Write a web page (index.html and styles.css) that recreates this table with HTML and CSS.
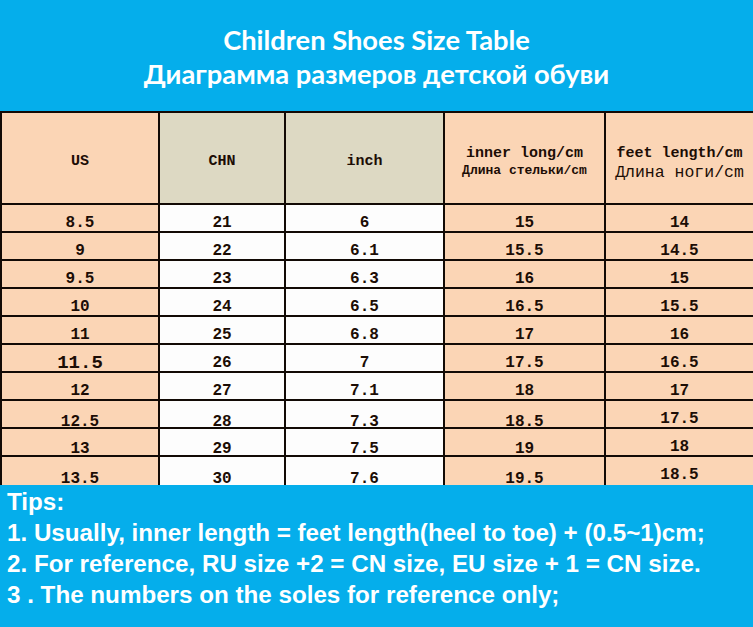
FILE: index.html
```html
<!DOCTYPE html>
<html>
<head>
<meta charset="utf-8">
<link rel="stylesheet" href="styles.css">
</head>
<body>
<div class="page">
  <header class="banner">
    <div class="title">Children Shoes Size Table</div>
    <div class="title">Диаграмма размеров детской обуви</div>
  </header>
  <div class="grid">
    <div class="cell hd peach">US</div>
    <div class="cell hd beige">CHN</div>
    <div class="cell hd beige">inch</div>
    <div class="cell hd peach two"><span class="en">inner long/cm</span><span class="ru-s">Длина стельки/cm</span></div>
    <div class="cell hd peach two two-b"><span class="en en-b">feet length/cm</span><span class="ru-l">Длина ноги/cm</span></div>

    <div class="cell peach">8.5</div><div class="cell">21</div><div class="cell">6</div><div class="cell peach">15</div><div class="cell peach">14</div>
    <div class="cell peach">9</div><div class="cell">22</div><div class="cell">6.1</div><div class="cell peach">15.5</div><div class="cell peach">14.5</div>
    <div class="cell peach">9.5</div><div class="cell">23</div><div class="cell">6.3</div><div class="cell peach">16</div><div class="cell peach">15</div>
    <div class="cell peach">10</div><div class="cell">24</div><div class="cell">6.5</div><div class="cell peach">16.5</div><div class="cell peach">15.5</div>
    <div class="cell peach">11</div><div class="cell">25</div><div class="cell">6.8</div><div class="cell peach">17</div><div class="cell peach">16</div>
    <div class="cell peach big">11.5</div><div class="cell">26</div><div class="cell">7</div><div class="cell peach">17.5</div><div class="cell peach">16.5</div>
    <div class="cell peach">12</div><div class="cell">27</div><div class="cell">7.1</div><div class="cell peach">18</div><div class="cell peach">17</div>
    <div class="cell peach lo1">12.5</div><div class="cell lo1">28</div><div class="cell lo1">7.3</div><div class="cell peach lo1">18.5</div><div class="cell peach">17.5</div>
    <div class="cell peach lo2">13</div><div class="cell lo2">29</div><div class="cell lo2">7.5</div><div class="cell peach lo2">19</div><div class="cell peach">18</div>
    <div class="cell peach lo3">13.5</div><div class="cell lo3">30</div><div class="cell lo3">7.6</div><div class="cell peach lo3">19.5</div><div class="cell peach">18.5</div>
  </div>
  <section class="tips">
    <p>Tips:</p>
    <p>1. Usually, inner length = feet length(heel to toe) + (0.5~1)cm;</p>
    <p>2. For reference, RU size +2 = CN size, EU size + 1 = CN size.</p>
    <p>3 . The numbers on the soles for reference only;</p>
  </section>
</div>
</body>
</html>
```
FILE: styles.css
```css
html, body {
  margin: 0;
  padding: 0;
}
body {
  width: 753px;
  height: 627px;
  overflow: hidden;
  background: #05aeeb;
}
.page {
  display: flex;
  flex-direction: column;
  height: 627px;
}
.banner {
  height: 111px;
  background: #05aeeb;
  display: flex;
  flex-direction: column;
  align-items: center;
  justify-content: center;
  padding-top: 2px;
  box-sizing: border-box;
}
.title {
  font-family: Lato, "Open Sans", sans-serif;
  font-weight: 700;
  color: #fff;
  font-size: 27.3px;
  line-height: 34px;
}
.grid {
  display: grid;
  grid-template-columns: 156px 124px 157px 159px 1fr;
  grid-template-rows: 90px repeat(9, 26px) 28px;
  gap: 2px;
  background: #120a05;
  padding: 2px 0 0 2px;
}
.cell {
  background: #fdfdfd;
  display: flex;
  align-items: flex-start;
  justify-content: center;
  box-sizing: border-box;
  padding-top: 13px;
  font-family: "Liberation Mono", "DejaVu Sans Mono", monospace;
  font-weight: 700;
  font-size: 16px;
  color: #1c0d05;
  line-height: 10px;
}
.peach {
  background: #fbd5b5;
}
.beige {
  background: #ddd9c3;
}
.hd {
  font-size: 15px;
  line-height: 16px;
  align-items: center;
  padding-top: 7px;
}
.two {
  flex-direction: column;
  padding-top: 8px;
}
.two-b {
  padding-top: 11px;
}
.en {
  font-size: 15px;
  line-height: 17px;
}
.en-b {
  line-height: 18px;
}
.ru-s {
  font-size: 13px;
  line-height: 17px;
}
.ru-l {
  font-size: 16.5px;
  font-weight: 400;
  line-height: 20px;
}
.big {
  font-size: 19px;
  padding-top: 13px;
}
.lo1 {
  padding-top: 16px;
}
.lo2 {
  padding-top: 15px;
}
.lo3 {
  padding-top: 17px;
}
.tips {
  flex: 1;
  background: #05aeeb;
  padding: 1px 0 0 7px;
}
.tips p {
  margin: 0;
  font-family: "Liberation Sans", Arial, sans-serif;
  font-weight: 700;
  color: #fff;
  font-size: 24.2px;
  line-height: 31px;
  white-space: nowrap;
}
```
